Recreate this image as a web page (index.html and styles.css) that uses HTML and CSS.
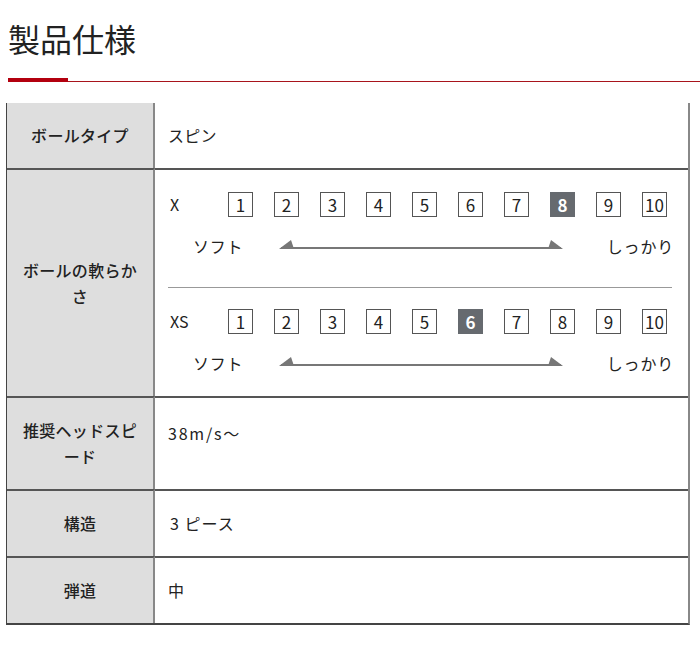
FILE: index.html
```html
<!DOCTYPE html>
<html lang="ja">
<head>
<meta charset="utf-8">
<link rel="stylesheet" href="styles.css">
</head>
<body>
<div class="page">
  <h2 class="title">製品仕様</h2>
  <div class="title-rule"><span class="title-rule-accent"></span></div>
  <table class="spec">
    <tr>
      <th class="first">ボールタイプ</th>
      <td class="first">スピン</td>
    </tr>
    <tr>
      <th>ボールの軟らかさ</th>
      <td class="scales">
        <div class="scale">
          <div class="boxes">
            <span class="label">X</span>
            <span class="box">1</span><span class="box">2</span><span class="box">3</span><span class="box">4</span><span class="box">5</span><span class="box">6</span><span class="box">7</span><span class="box on">8</span><span class="box">9</span><span class="box">10</span>
          </div>
          <div class="range">
            <span class="soft">ソフト</span>
            <svg class="arrow" width="284" height="14" viewBox="0 0 284 14"><rect x="2" y="8" width="280" height="2" fill="#777"/><polygon points="0,10 12,1 15,10" fill="#777"/><polygon points="284,10 272,1 269,10" fill="#777"/></svg>
            <span class="hard">しっかり</span>
          </div>
        </div>
        <div class="scale second">
          <div class="boxes">
            <span class="label">XS</span>
            <span class="box">1</span><span class="box">2</span><span class="box">3</span><span class="box">4</span><span class="box">5</span><span class="box on">6</span><span class="box">7</span><span class="box">8</span><span class="box">9</span><span class="box">10</span>
          </div>
          <div class="range">
            <span class="soft">ソフト</span>
            <svg class="arrow" width="284" height="14" viewBox="0 0 284 14"><rect x="2" y="8" width="280" height="2" fill="#777"/><polygon points="0,10 12,1 15,10" fill="#777"/><polygon points="284,10 272,1 269,10" fill="#777"/></svg>
            <span class="hard">しっかり</span>
          </div>
        </div>
      </td>
    </tr>
    <tr>
      <th>推奨ヘッドスピード</th>
      <td class="top">38m/s〜</td>
    </tr>
    <tr>
      <th>構造</th>
      <td class="piece">3 ピース</td>
    </tr>
    <tr>
      <th>弾道</th>
      <td>中</td>
    </tr>
  </table>
</div>
</body>
</html>
```

FILE: styles.css
```css
html, body {
  margin: 0;
  padding: 0;
  background: #fff;
}
body {
  font-family: "Noto Sans CJK JP", "Noto Sans", sans-serif;
  color: #222;
  font-size: 16px;
  line-height: 26px;
}
.page {
  padding: 14px 0 0 0;
}
.title {
  margin: 0 0 0 8px;
  font-size: 32px;
  line-height: 48px;
  font-weight: 400;
  color: #222;
}
.title-rule {
  margin: 16px 0 0 8px;
  height: 4px;
  border-bottom: 1px solid #a8141c;
  box-sizing: border-box;
}
.title-rule-accent {
  display: block;
  width: 60px;
  height: 4px;
  background: #b3000f;
}
.spec {
  margin: 21px 0 0 6px;
  width: 684px;
  border-collapse: separate;
  border-spacing: 0;
  border-left: 1px solid #444;
  border-right: 2px solid #888;
  border-bottom: 2px solid #444;
  box-shadow: 0 7px 0 #f4f4f4;
}
.spec th {
  width: 116px;
  background: #dedede;
  font-weight: 500;
  font-size: 16px;
  letter-spacing: 0.3px;
  text-align: center;
  vertical-align: middle;
  padding: 19px 15px 20px;
  border-right: 2px solid #888;
  border-top: 2px solid #555;
}
.spec td {
  text-align: left;
  vertical-align: middle;
  padding: 19px 16px 20px 13px;
  border-top: 2px solid #555;
  letter-spacing: 0.3px;
}
.spec th.first, .spec td.first {
  border-top: none;
}
.spec td.top {
  vertical-align: top;
  padding-top: 22px;
  letter-spacing: 1.8px;
}
.spec td.piece {
  padding-left: 15px;
  letter-spacing: 1px;
}
.spec td.scales {
  padding-top: 22px;
  padding-bottom: 20px;
  letter-spacing: 0;
}
.scale.second {
  margin-top: 28px;
  padding-top: 21px;
  border-top: 1px solid #999;
}
.boxes {
  display: flex;
  align-items: center;
  gap: 21px;
}
.label {
  width: 37px;
  padding-left: 2px;
  line-height: 25px;
}
.box {
  box-sizing: border-box;
  width: 25px;
  height: 25px;
  border: 1px solid #555;
  display: flex;
  align-items: center;
  justify-content: center;
  font-size: 17px;
  line-height: 1;
}
.box.on {
  background: #666a6f;
  border-color: #666a6f;
  color: #fff;
  font-weight: 700;
}
.range {
  display: flex;
  align-items: center;
  margin-top: 16px;
}
.soft {
  margin-left: 25px;
  letter-spacing: 0.8px;
}
.arrow {
  display: block;
  margin-left: 36px;
}
.hard {
  margin-left: auto;
  margin-right: -2px;
  letter-spacing: 0.8px;
}
```
